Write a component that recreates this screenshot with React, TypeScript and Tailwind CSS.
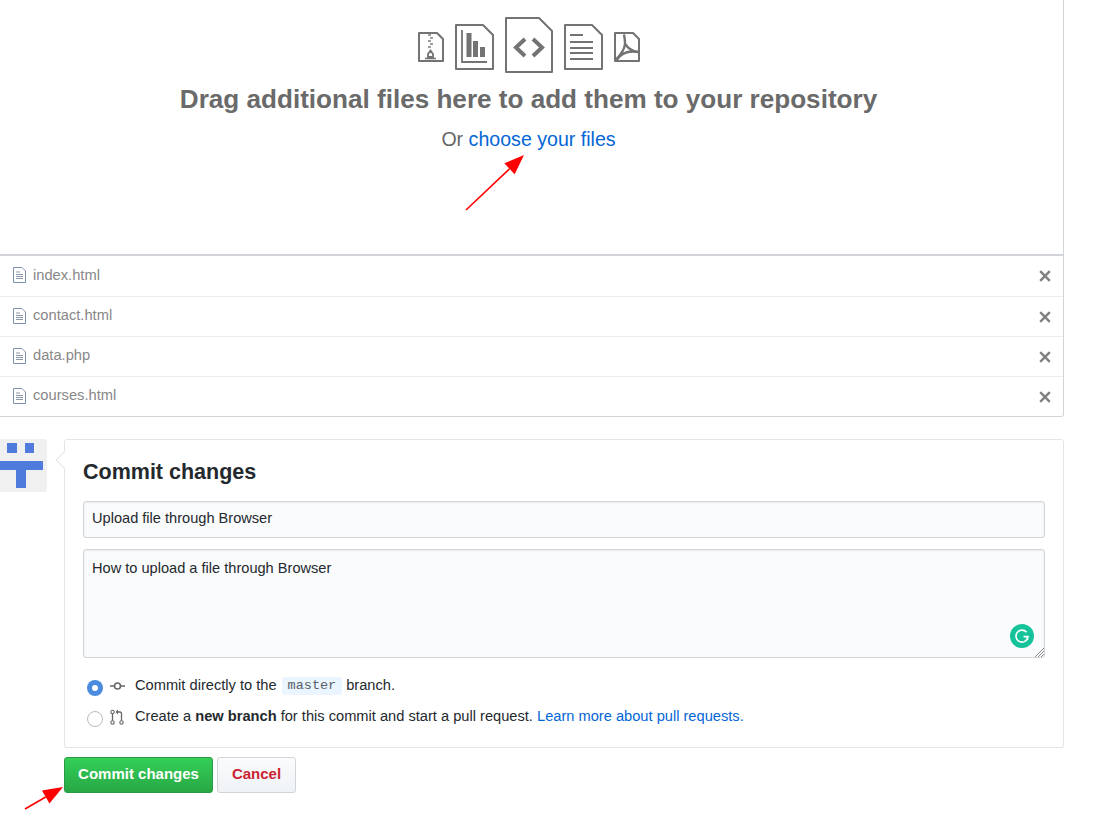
import React from 'react';

const font = { fontFamily: '"Liberation Sans", Arial, sans-serif' };

function FileShape({ w, h, fold, sw = 2, className = '', children }: { w: number; h: number; fold: number; sw?: number; className?: string; children?: React.ReactNode }) {
  const o = sw / 2;
  return (
    <svg width={w} height={h} viewBox={`0 0 ${w} ${h}`} fill="none" className={`shrink-0 ${className}`}>
      <path
        d={`M${o} ${o}H${w - fold}L${w - o} ${fold}V${h - o}H${o}Z`}
        stroke="#737373"
        strokeWidth={sw}
        strokeLinejoin="round"
      />
      {children}
    </svg>
  );
}

function UploadIcons() {
  return (
    <div className="flex items-center gap-[11px] h-[56px] mt-[17px]">
      <FileShape w={26} h={30} fold={7} className="mt-[4px]">
        <path d="M10 3h3M12 6h3M10 9h3M12 12h3M10 15h3" stroke="#808080" strokeWidth="1.5" />
        <path d="M10 25v-3l2.5-3.5L15 22v3z" stroke="#737373" strokeWidth="1.8" />
        <path d="M7 26.5h11" stroke="#737373" strokeWidth="1.5" />
      </FileShape>
      <FileShape w={39} h={46} fold={11} className="mt-[4px]">
        <path d="M7 6v32h25" stroke="#737373" strokeWidth="1.8" />
        <path d="M11.5 9h5v24h-5zM18 17h5v16h-5zM25 23h5v10h-5z" fill="#737373" />
      </FileShape>
      <FileShape w={48} h={56} fold={14}>
        <path d="M20 22l-9 8.5 9 8.5M28 22l9 8.5-9 8.5" stroke="#737373" strokeWidth="4" />
      </FileShape>
      <FileShape w={39} h={46} fold={11} className="mt-[4px]">
        <path d="M6 11h13M6 18h23M6 24h23M6 29h23M6 35h23" stroke="#737373" strokeWidth="2" />
      </FileShape>
      <FileShape w={26} h={30} fold={7} className="mt-[4px]">
        <path d="M1.5 28c5-5 9-11 9.5-16 .2-3-.3-6-1-9.5M11.5 12c2 4 6 7 13 8M2.5 28c4-6 11-10 22-8" stroke="#737373" strokeWidth="2.4" />
      </FileShape>
    </div>
  );
}

function SmallFile() {
  return (
    <svg width="13" height="16" viewBox="0 0 13 16" fill="none" className="shrink-0">
      <path d="M.5.5h8.5l3.5 3.5v11.5H.5z" stroke="#7d90ad" strokeWidth="1" />
      <path d="M3 5h4M3 7.5h7M3 9.5h7M3 11.5h7" stroke="#8a96a8" strokeWidth="1" />
    </svg>
  );
}

function FileRow({ name, className }: { name: string; className: string }) {
  return (
    <div className={`flex items-center pl-[13px] pr-[12px] pb-[2px] ${className}`}>
      <SmallFile />
      <span className="ml-[7px] text-[14.7px] text-[#888]">{name}</span>
      <svg width="12" height="12" viewBox="0 0 12 12" className="ml-auto mt-[2px]">
        <path d="M1.2 1.2l9.6 9.6M10.8 1.2l-9.6 9.6" stroke="#808080" strokeWidth="2.4" />
      </svg>
    </div>
  );
}

function Avatar() {
  return (
    <div className="relative w-[47px] h-[53px] rounded-r-[3px] bg-[#f0f0f0] overflow-hidden shrink-0">
      <div className="absolute left-[7px] top-[4px] w-[10px] h-[10px] bg-[#4e7bdc]" />
      <div className="absolute left-[25px] top-[4px] w-[9px] h-[10px] bg-[#4e7bdc]" />
      <div className="absolute left-0 top-[22px] w-[43px] h-[9px] bg-[#4e7bdc]" />
      <div className="absolute left-[16px] top-[22px] w-[10px] h-[27px] bg-[#4e7bdc]" />
    </div>
  );
}

function Arrow({ x1, y1, x2, y2, className }: { x1: number; y1: number; x2: number; y2: number; className: string }) {
  const w = Math.abs(x2 - x1);
  const h = Math.abs(y2 - y1);
  const len = Math.hypot(w, h);
  const ux = (x2 - x1) / len;
  const uy = (y2 - y1) / len;
  const bx = x2 - ux * 20;
  const by = y2 - uy * 20;
  const head = `${x2},${y2} ${bx - uy * 7.5},${by + ux * 7.5} ${bx + uy * 7.5},${by - ux * 7.5}`;
  return (
    <svg width={w} height={h} viewBox={`${Math.min(x1, x2)} ${Math.min(y1, y2)} ${w} ${h}`} className={`absolute overflow-visible ${className}`}>
      <line x1={x1} y1={y1} x2={bx} y2={by} stroke="#ff0000" strokeWidth="1.6" />
      <polygon points={head} fill="#ff0000" />
    </svg>
  );
}

export default function App() {
  return (
    <div className="relative w-[1107px] h-[822px] overflow-hidden bg-white text-[#24292e]" style={font}>
      <div className="w-[1064px]">
        {/* drop zone */}
        <div className="h-[254px] flex flex-col items-center pr-[6px] border-r border-[#d1d5da]">
          <UploadIcons />
          <h2 className="mt-[8px] text-[26.1px] leading-[36px] font-bold text-[#6a6a6a]">
            Drag additional files here to add them to your repository
          </h2>
          <p className="mt-[8px] text-[19.6px] leading-[28px] text-[#666]">
            Or <span className="text-[#0366d6]">choose your files</span>
          </p>
        </div>

        {/* file list */}
        <div className="border-t-[2px] border-b border-r border-[#d1d5da] rounded-br-[3px]">
          <FileRow name="index.html" className="h-[41px] border-b border-[#eaecef]" />
          <FileRow name="contact.html" className="h-10 border-b border-[#eaecef]" />
          <FileRow name="data.php" className="h-10 border-b border-[#eaecef]" />
          <FileRow name="courses.html" className="h-[39px]" />
        </div>

        {/* commit form */}
        <div className="flex mt-[22px] gap-[17px]">
          <Avatar />
          <div className="relative flex-1 h-[309px] border border-[#e1e4e8] rounded-[3px] px-[18px] pt-[17px]">
            <div className="absolute -left-[7px] top-[14px] w-[12px] h-[12px] rotate-45 bg-white border-l border-b border-[#e1e4e8]" />
            <h3 className="relative text-[21.5px] leading-[30px] font-bold">Commit changes</h3>
            <div className="mt-[14px] h-[37px] flex items-center px-2 pb-[2px] text-[14.6px] bg-[#fafbfc] border border-[#d1d5da] rounded-[3px] shadow-[inset_0_1px_2px_rgba(27,31,35,0.075)]">
              Upload file through Browser
            </div>
            <div className="relative mt-[11px] h-[109px] px-2 pt-[9px] text-[14.6px] leading-[18px] bg-[#fafbfc] border border-[#d1d5da] rounded-[3px] shadow-[inset_0_1px_2px_rgba(27,31,35,0.075)]">
              How to upload a file through Browser
              <div className="absolute right-[10px] bottom-[9px] w-[24px] h-[24px] rounded-full bg-[#15c39a] flex items-center justify-center">
                <svg width="16" height="16" viewBox="0 0 16 16" fill="none">
                  <path d="M12.6 4.2A6 6 0 1 0 14 8.6H9.5" stroke="#fff" strokeWidth="1.6" />
                  <path d="M13.4 8.6v3.2" stroke="#fff" strokeWidth="1.6" />
                </svg>
              </div>
              <svg width="10" height="10" viewBox="0 0 10 10" className="absolute right-0 bottom-0">
                <path d="M1 10L10 1M4 10l6-6M7 10l3-3" stroke="#8a8a8a" strokeWidth="1" />
              </svg>
            </div>
            <div className="mt-[17px] flex items-center h-[21px] text-[14.65px]">
              <span className="ml-[4px] mt-[4px] w-4 h-4 rounded-full bg-[#4a8be0] flex items-center justify-center shrink-0">
                <span className="w-[6px] h-[6px] rounded-full bg-white" />
              </span>
              <svg width="15" height="10" viewBox="0 0 15 10" fill="none" className="ml-[7px] shrink-0">
                <circle cx="7.5" cy="5" r="3" stroke="#666" strokeWidth="1.6" />
                <path d="M0 5h4.5M10.5 5H15" stroke="#666" strokeWidth="1.6" />
              </svg>
              <span className="ml-[10px]">Commit directly to the</span>
              <code className="ml-[5px] px-[6px] h-[18px] leading-[18px] mt-[1px] rounded-[3px] bg-[#eaf5ff] text-[#586069] text-[13.5px]" style={{ fontFamily: '"Liberation Mono", monospace' }}>
                master
              </code>
              <span className="ml-[4px]">branch.</span>
            </div>
            <div className="mt-[10px] flex items-center h-[21px] text-[14.65px]">
              <span className="ml-[4px] mt-[4px] w-4 h-4 rounded-full bg-white border border-[#bbb] shrink-0" />
              <svg width="14" height="16" viewBox="0 0 14 16" fill="none" className="ml-[7px] shrink-0">
                <circle cx="2.5" cy="3" r="1.7" stroke="#666" strokeWidth="1.1" />
                <circle cx="2.5" cy="13.5" r="1.7" stroke="#666" strokeWidth="1.1" />
                <circle cx="11.5" cy="13.5" r="1.7" stroke="#666" strokeWidth="1.1" />
                <path d="M2.5 5v6.5M11.5 11.5V4.5a1.5 1.5 0 0 0-1.5-1.5H7" stroke="#666" strokeWidth="1.3" />
                <path d="M8 .5L5.5 3 8 5.5z" fill="#666" />
              </svg>
              <span className="ml-[11px]">
                Create a <b>new branch</b> for this commit and start a pull request.{' '}
                <span className="text-[#0366d6]">Learn more about pull requests.</span>
              </span>
            </div>
          </div>
        </div>

        {/* buttons */}
        <div className="flex gap-1 mt-[9px] ml-[64px]">
          <div className="w-[149px] h-[36px] flex items-center justify-center pb-[2px] rounded-[3px] border border-[#2a9a45] bg-gradient-to-b from-[#34d058] to-[#28a745] text-[15px] font-bold text-white">
            Commit changes
          </div>
          <div className="w-[79px] h-[36px] flex items-center justify-center pb-[2px] rounded-[3px] border border-[#d1d5da] bg-gradient-to-b from-[#fafbfc] to-[#eff3f6] text-[15px] font-bold text-[#cb2431]">
            Cancel
          </div>
        </div>
      </div>

      <Arrow x1={466} y1={210} x2={524} y2={155} className="left-[466px] top-[155px]" />
      <Arrow x1={25} y1={809} x2={63} y2={787} className="left-[25px] top-[787px]" />
    </div>
  );
}
